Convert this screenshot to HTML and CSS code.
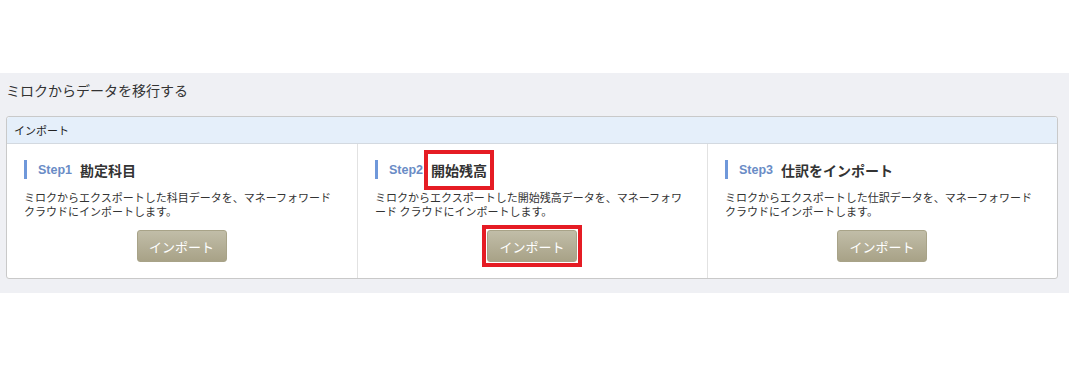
FILE: index.html
```html
<!DOCTYPE html>
<html lang="ja">
<head>
    <meta charset="UTF-8">
    <meta name="viewport" content="width=device-width, initial-scale=1.0">
    <title>ミロクからデータを移行する</title>
    <link rel="stylesheet" href="styles.css">
</head>
<body>
    <div class="page">
        <h1 class="page-title">ミロクからデータを移行する</h1>

        <div class="panel">
            <div class="panel-head">インポート</div>
            <div class="steps">
                <!-- Step1 -->
                <div class="step">
                    <h2 class="step-title"><span class="step-no">Step1</span><span class="step-name">勘定科目</span></h2>
                    <p class="step-desc">ミロクからエクスポートした科目データを、マネーフォワード クラウドにインポートします。</p>
                    <div class="step-action"><button class="btn">インポート</button></div>
                </div>

                <!-- Step2 -->
                <div class="step">
                    <h2 class="step-title"><span class="step-no">Step2</span><span class="step-name mark">開始残高</span></h2>
                    <p class="step-desc">ミロクからエクスポートした開始残高データを、マネーフォワード クラウドにインポートします。</p>
                    <div class="step-action"><span class="mark-box"><button class="btn">インポート</button></span></div>
                </div>

                <!-- Step3 -->
                <div class="step">
                    <h2 class="step-title"><span class="step-no">Step3</span><span class="step-name">仕訳をインポート</span></h2>
                    <p class="step-desc">ミロクからエクスポートした仕訳データを、マネーフォワード クラウドにインポートします。</p>
                    <div class="step-action"><button class="btn">インポート</button></div>
                </div>
            </div>
        </div>
    </div>
</body>
</html>
```

FILE: styles.css
```css
body {
    margin: 0;
    padding: 73px 0 0;
    background-color: #fff;
    font-family: "Noto Sans CJK JP", "Liberation Sans", sans-serif;
    color: #333;
}
.page {
    background-color: #eff0f4;
    margin-right: 4px;
    padding: 7px 11px 14px 6px;
}
.page-title {
    margin: 0 0 16px;
    font-size: 14px;
    font-weight: normal;
    line-height: 20px;
    color: #333;
}
.panel {
    background-color: #fff;
    border: 1px solid #c9c9c9;
    border-radius: 3px;
}
.panel-head {
    background-color: #e5effa;
    border-bottom: 1px solid #d3d9e0;
    border-radius: 3px 3px 0 0;
    font-size: 11px;
    line-height: 16px;
    padding: 5px 7px;
    color: #222;
}
.steps {
    display: grid;
    grid-template-columns: 1fr 1fr 1fr;
}
.step {
    padding: 16px 18px 16px 17px;
}
.step + .step {
    border-left: 1px solid #e2e2e2;
}
.step-title {
    margin: 0;
    display: flex;
    align-items: center;
    height: 19px;
    border-left: 3px solid #6f98da;
    padding-left: 11px;
}
.step-no {
    font-family: "Liberation Sans", Arial, sans-serif;
    font-size: 12.5px;
    font-weight: bold;
    color: #6a8cc6;
    margin-right: 8px;
}
.step-name {
    font-size: 14px;
    font-weight: bold;
    color: #333;
}
.step-desc {
    margin: 11px 0 12px;
    font-size: 11px;
    line-height: 14px;
    color: #333;
}
.step-action {
    text-align: center;
    line-height: 0;
}
.btn {
    width: 90px;
    height: 32px;
    border: 1px solid #a8a388;
    border-radius: 3px;
    background: linear-gradient(#c1bda8, #a8a287);
    color: #fff;
    font-family: "Noto Sans CJK JP", sans-serif;
    font-size: 13px;
    vertical-align: top;
    cursor: pointer;
}

/* 赤枠の注釈 */
.mark {
    outline: 4px solid #e51c24;
    outline-offset: 3px;
    padding: 3px 0;
}
.mark-box {
    display: inline-block;
    line-height: 0;
    outline: 4px solid #e51c24;
    outline-offset: 1px;
}
```
